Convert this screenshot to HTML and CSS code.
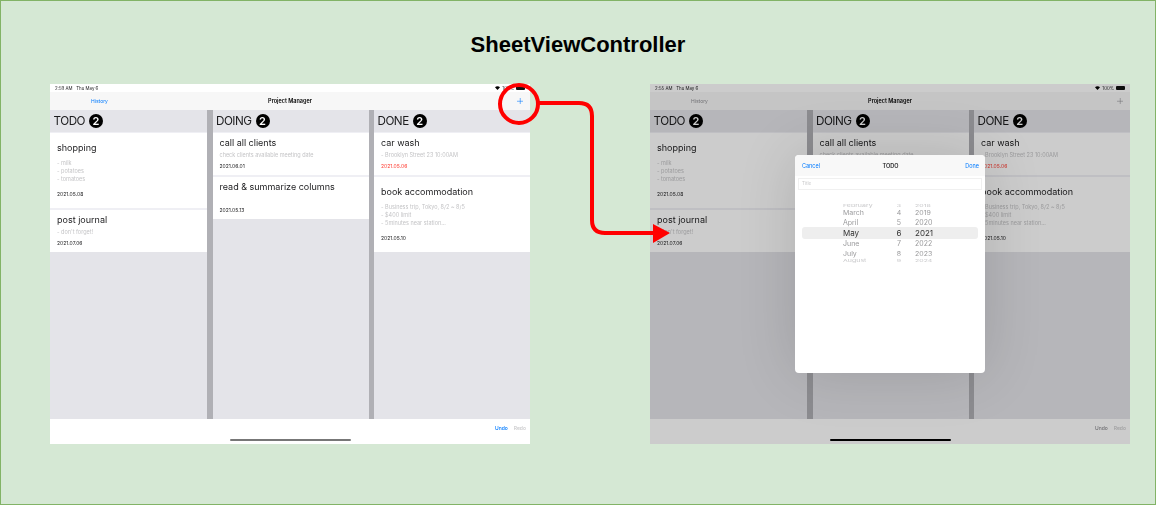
FILE: index.html
```html
<!DOCTYPE html>
<html lang="en">
<head>
    <meta charset="UTF-8">
    <meta name="viewport" content="width=device-width, initial-scale=1.0">
    <title>SheetViewController</title>
    <link rel="stylesheet" href="styles.css">
</head>
<body>
    <h1>SheetViewController</h1>
    <div class="stage">
        <div class="ipad">
            <div class="status">
                <span>2:59 AM &nbsp;&nbsp;Thu May 6</span>
                <span class="status-right">
                    <svg class="wifi" viewBox="0 0 10 8"><path d="M5 8 0 2.6C2.8 0 7.2 0 10 2.6z"/></svg>
                    <span>100%</span>
                    <span class="battery"></span>
                </span>
            </div>
            <div class="nav">
                <a class="history">History</a>
                <b class="nav-title">Project Manager</b>
                <svg class="plus" viewBox="0 0 7 7"><path d="M3.5 0v7M0 3.5h7"/></svg>
            </div>
            <div class="board">
                <section class="column">
                    <h2 class="col-head">TODO <span class="badge">2</span></h2>
                    <div class="card tall">
                        <h3>shopping</h3>
                        <p class="desc">- milk<br>- potatoes<br>- tomatoes</p>
                        <p class="date">2021.05.08</p>
                    </div>
                    <div class="card">
                        <h3>post journal</h3>
                        <p class="desc">- don't forget!</p>
                        <p class="date">2021.07.06</p>
                    </div>
                </section>
                <section class="column">
                    <h2 class="col-head">DOING <span class="badge">2</span></h2>
                    <div class="card">
                        <h3>call all clients</h3>
                        <p class="desc">check clients available meeting date</p>
                        <p class="date">2021.06.01</p>
                    </div>
                    <div class="card">
                        <h3>read &amp; summarize columns</h3>
                        <p class="desc">&nbsp;</p>
                        <p class="date">2021.05.13</p>
                    </div>
                </section>
                <section class="column">
                    <h2 class="col-head">DONE <span class="badge">2</span></h2>
                    <div class="card">
                        <h3>car wash</h3>
                        <p class="desc">- Brooklyn Street 23 10:00AM</p>
                        <p class="date overdue">2021.05.06</p>
                    </div>
                    <div class="card tall">
                        <h3>book accommodation</h3>
                        <p class="desc">- Business trip, Tokyo, 8/2 ~ 8/5<br>- $400 limit<br>- 5minutes near station...</p>
                        <p class="date">2021.05.10</p>
                    </div>
                </section>
            </div>
            <div class="toolbar">
                <div class="actions"><a class="undo">Undo</a><a class="redo">Redo</a></div>
                <div class="home"></div>
            </div>
        </div>

        <div class="ipad behind">
            <div class="status">
                <span>2:55 AM &nbsp;&nbsp;Thu May 6</span>
                <span class="status-right">
                    <svg class="wifi" viewBox="0 0 10 8"><path d="M5 8 0 2.6C2.8 0 7.2 0 10 2.6z"/></svg>
                    <span>100%</span>
                    <span class="battery"></span>
                </span>
            </div>
            <div class="nav">
                <a class="history">History</a>
                <b class="nav-title">Project Manager</b>
                <svg class="plus" viewBox="0 0 7 7"><path d="M3.5 0v7M0 3.5h7"/></svg>
            </div>
            <div class="board">
                <section class="column">
                    <h2 class="col-head">TODO <span class="badge">2</span></h2>
                    <div class="card tall">
                        <h3>shopping</h3>
                        <p class="desc">- milk<br>- potatoes<br>- tomatoes</p>
                        <p class="date">2021.05.08</p>
                    </div>
                    <div class="card">
                        <h3>post journal</h3>
                        <p class="desc">- don't forget!</p>
                        <p class="date">2021.07.06</p>
                    </div>
                </section>
                <section class="column">
                    <h2 class="col-head">DOING <span class="badge">2</span></h2>
                    <div class="card">
                        <h3>call all clients</h3>
                        <p class="desc">check clients available meeting date</p>
                        <p class="date">2021.06.01</p>
                    </div>
                    <div class="card">
                        <h3>read &amp; summarize columns</h3>
                        <p class="desc">&nbsp;</p>
                        <p class="date">2021.05.13</p>
                    </div>
                </section>
                <section class="column">
                    <h2 class="col-head">DONE <span class="badge">2</span></h2>
                    <div class="card">
                        <h3>car wash</h3>
                        <p class="desc">- Brooklyn Street 23 10:00AM</p>
                        <p class="date overdue">2021.05.06</p>
                    </div>
                    <div class="card tall">
                        <h3>book accommodation</h3>
                        <p class="desc">- Business trip, Tokyo, 8/2 ~ 8/5<br>- $400 limit<br>- 5minutes near station...</p>
                        <p class="date">2021.05.10</p>
                    </div>
                </section>
            </div>
            <div class="toolbar">
                <div class="actions"><a class="undo">Undo</a><a class="redo">Redo</a></div>
                <div class="home"></div>
            </div>

            <div class="dim"></div>
            <div class="sheet">
                <div class="sheet-head">
                    <a class="sheet-link">Cancel</a>
                    <b>TODO</b>
                    <a class="sheet-link done">Done</a>
                </div>
                <div class="title-field">Title</div>
                <div class="picker">
                    <div class="pick-row far"><span>February</span><span>3</span><span>2018</span></div>
                    <div class="pick-row mid"><span>March</span><span>4</span><span>2019</span></div>
                    <div class="pick-row near"><span>April</span><span>5</span><span>2020</span></div>
                    <div class="pick-row selected"><span>May</span><span>6</span><span>2021</span></div>
                    <div class="pick-row near"><span>June</span><span>7</span><span>2022</span></div>
                    <div class="pick-row mid"><span>July</span><span>8</span><span>2023</span></div>
                    <div class="pick-row far"><span>August</span><span>9</span><span>2024</span></div>
                </div>
            </div>
        </div>
    </div>

    <svg class="arrow" viewBox="0 0 1156 505">
        <circle cx="519" cy="104" r="19" />
        <path d="M539 103H579Q592 103 592 116V220Q592 233 605 233H655"/>
        <polygon points="653,224 670,233 653,243"/>
    </svg>
</body>
</html>
```

FILE: styles.css
```css
* {
    box-sizing: border-box;
}
body {
    margin: 0;
    height: 505px;
    overflow: hidden;
    position: relative;
    background-color: #d5e8d4;
    border: 1px solid #82b366;
    font-family: Inter, "Liberation Sans", sans-serif;
    color: #1c1c1e;
}
h1 {
    margin: 32px 0 0;
    font-family: "Liberation Sans", Arial, sans-serif;
    font-size: 22px;
    line-height: 24px;
    text-align: center;
    color: #000;
}
.stage {
    display: flex;
    gap: 120px;
    margin-top: 27px;
    padding-left: 49px;
}
/* the screenshots are scaled down in the original, so a touch of blur */
.ipad {
    position: relative;
    width: 480px;
    height: 360px;
    overflow: hidden;
    display: flex;
    flex-direction: column;
    background: #fff;
    filter: blur(.25px);
}
.status {
    height: 8px;
    padding: 0 5px 0 5px;
    display: flex;
    justify-content: space-between;
    align-items: center;
    font-size: 4.4px;
    background: #fff;
}
.status-right {
    display: flex;
    align-items: center;
    gap: 2px;
}
.wifi {
    width: 5px;
    height: 4px;
}
.battery {
    width: 9px;
    height: 4px;
    background: #111;
    border-radius: 1px;
}
.nav {
    height: 18px;
    padding: 0 7px;
    display: grid;
    grid-template-columns: 1fr auto 1fr;
    align-items: center;
    background: #f7f7f7;
    font-size: 5px;
}
.history {
    padding-left: 34px;
    color: #007aff;
}
.nav-title {
    font-size: 5.5px;
    font-weight: 600;
    color: #000;
}
.plus {
    justify-self: end;
    width: 6.5px;
    height: 6.5px;
    fill: none;
    stroke: #007aff;
    stroke-width: .6;
}
.board {
    flex: 1;
    display: grid;
    grid-template-columns: 157px 156px 156px;
    gap: 5.5px;
    background: #b0b0b5;
}
.column {
    background: #e4e4e9;
    display: flex;
    flex-direction: column;
}
.col-head {
    height: 23px;
    margin: 0;
    padding-left: 3.5px;
    display: flex;
    align-items: center;
    gap: 4px;
    font-size: 11.7px;
    font-weight: 400;
    letter-spacing: -.5px;
    border-bottom: 1px solid #efeff4;
}
.badge {
    width: 14px;
    height: 14px;
    border-radius: 50%;
    background: #000;
    color: #fff;
    font-size: 11px;
    font-weight: 600;
    line-height: 14px;
    letter-spacing: 0;
    text-align: center;
}
.card {
    padding: 4px 7px 5px;
    background: #fff;
    border-bottom: 2px solid #efeff4;
}
.card:last-child {
    border-bottom: 0;
}
.card h3 {
    margin: 0;
    font-size: 9px;
    font-weight: 400;
    line-height: 12px;
    white-space: nowrap;
}
.desc {
    margin: 2px 0 0;
    font-size: 5.5px;
    line-height: 8px;
    color: #c4c4c6;
    white-space: nowrap;
}
.date {
    margin: 3px 0 0;
    font-size: 5px;
    line-height: 8px;
}
.overdue {
    color: #ff3b30;
}
.tall {
    padding: 9px 7px 10px;
}
.tall .desc {
    margin-top: 5px;
}
.tall .date {
    margin-top: 7px;
}
.toolbar {
    height: 25px;
    display: flex;
    flex-direction: column;
    align-items: center;
    background: #fff;
}
.actions {
    align-self: flex-end;
    display: flex;
    gap: 6px;
    padding: 6px 4px 0 0;
    height: 20px;
    font-size: 5px;
    font-weight: 500;
}
.undo {
    color: #007aff;
}
.redo {
    color: #c8c8ca;
}
.home {
    width: 121px;
    height: 2px;
    border-radius: 1px;
    background: #777;
}
/* tint goes grey while the sheet is up */
.behind .history,
.behind .undo {
    color: #8e8e93;
}
.behind .plus {
    stroke: #8e8e93;
}
.behind .home {
    background: #000;
}
.dim {
    position: absolute;
    inset: 0;
    background: rgba(0, 0, 0, .2);
}
.sheet {
    position: absolute;
    left: 145px;
    top: 71px;
    width: 190px;
    height: 218px;
    background: #fff;
    border-radius: 4px;
    box-shadow: 0 0 60px rgba(0, 0, 0, .14);
}
.sheet-head {
    height: 21px;
    padding: 0 6px 0 7px;
    display: grid;
    grid-template-columns: 1fr auto 1fr;
    align-items: center;
    background: #f8f8f8;
    border-radius: 4px 4px 0 0;
    font-size: 5.5px;
}
.sheet-head b {
    font-weight: 600;
}
.sheet-link {
    color: #007aff;
}
.done {
    text-align: right;
}
.title-field {
    height: 12px;
    margin: 2px 3px 0;
    padding-left: 3px;
    border: 1px solid #f0f0f0;
    font-size: 4.5px;
    line-height: 10px;
    color: #c8c8ca;
}
.picker {
    margin: 13px 7px 0;
}
.pick-row {
    display: grid;
    grid-template-columns: 50px 12px 1fr;
    padding-left: 41px;
    align-items: center;
    font-size: 7px;
    color: #9a9a9c;
    white-space: nowrap;
}
.pick-row span:nth-child(2) {
    text-align: center;
}
.pick-row span:nth-child(3) {
    padding-left: 10px;
}
.far {
    height: 5px;
    line-height: 5px;
    color: #c8c8ca;
    transform: scaleY(.55);
}
.mid {
    height: 9.5px;
    transform: scaleY(.85);
}
.near {
    height: 9.5px;
}
.selected {
    height: 12px;
    border-radius: 3px;
    background: #eeeeee;
    font-size: 8px;
    color: #333;
}
.arrow {
    position: absolute;
    left: -1px;
    top: -1px;
    width: 1156px;
    height: 505px;
    fill: none;
    stroke: #f00;
    stroke-width: 4;
}
.arrow polygon {
    fill: #f00;
    stroke: none;
}
```
